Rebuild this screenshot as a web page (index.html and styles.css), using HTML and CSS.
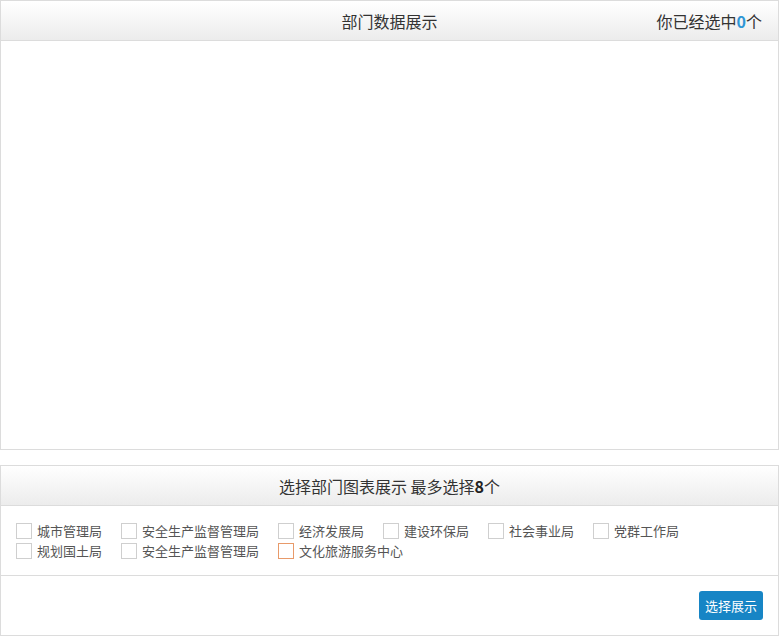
FILE: index.html
```html
<!DOCTYPE html>
<html lang="zh-CN">
<head>
<meta charset="utf-8">
<title>部门数据展示</title>
<link rel="stylesheet" href="styles.css">
</head>
<body>
<div class="panel panel-chart">
  <div class="panel-head">
    <span class="head-title">部门数据展示</span>
    <span class="head-count">你已经选中<b class="num">0</b>个</span>
  </div>
  <div class="chart-body"></div>
</div>
<div class="panel panel-select">
  <div class="panel-head">
    <span class="head-title">选择部门图表展示 最多选择<b>8</b>个</span>
  </div>
  <div class="options">
    <div class="opt-row">
      <label class="opt"><span class="box"></span>城市管理局</label>
      <label class="opt"><span class="box"></span>安全生产监督管理局</label>
      <label class="opt"><span class="box"></span>经济发展局</label>
      <label class="opt"><span class="box"></span>建设环保局</label>
      <label class="opt"><span class="box"></span>社会事业局</label>
      <label class="opt"><span class="box"></span>党群工作局</label>
    </div>
    <div class="opt-row">
      <label class="opt"><span class="box"></span>规划国土局</label>
      <label class="opt"><span class="box"></span>安全生产监督管理局</label>
      <label class="opt"><span class="box box-focus"></span>文化旅游服务中心</label>
    </div>
  </div>
  <div class="actions">
    <button class="btn">选择展示</button>
  </div>
</div>
</body>
</html>
```
FILE: styles.css
```css
* { box-sizing: border-box; }
html, body { margin: 0; padding: 0; background: #fff; }
body {
  font-family: "Noto Sans CJK SC", "Microsoft YaHei", sans-serif;
  color: #333;
  width: 779px;
}
.panel {
  border: 1px solid #dcdcdc;
  background: #fff;
}
.panel-chart { height: 450px; }
.panel-select { margin-top: 15px; height: 171px; }
.panel-head {
  height: 40px;
  border-bottom: 1px solid #dcdcdc;
  background: linear-gradient(to bottom, #ffffff 0%, #ececec 100%);
  display: flex;
  align-items: center;
  justify-content: center;
  position: relative;
  font-size: 16px;
  color: #333;
  line-height: 20px;
}
.head-title b { font-weight: bold; color: #222; }
.head-count {
  position: absolute;
  right: 16px;
  top: 10px;
}
.head-count .num { color: #2f96d5; font-weight: bold; }
.options {
  padding: 15px 15px 14px;
  border-bottom: 1px solid #dcdcdc;
  font-size: 13px;
  color: #555;
}
.opt-row {
  display: flex;
  height: 20px;
  align-items: center;
}
.opt {
  display: flex;
  align-items: center;
  gap: 5px;
  margin-right: 19px;
  line-height: 20px;
  white-space: nowrap;
}
.box {
  width: 16px;
  height: 16px;
  border: 1px solid #cfcfcf;
  background: #fff;
  display: inline-block;
}
.box-focus { border-color: #e89a6a; }
.actions {
  display: flex;
  justify-content: flex-end;
  padding: 15px 15px 14px;
}
.btn {
  width: 64px;
  height: 29px;
  border: none;
  border-radius: 3px;
  background: #1785c5;
  color: #fff;
  font-family: inherit;
  font-size: 13px;
  padding: 0;
  cursor: pointer;
}
```
